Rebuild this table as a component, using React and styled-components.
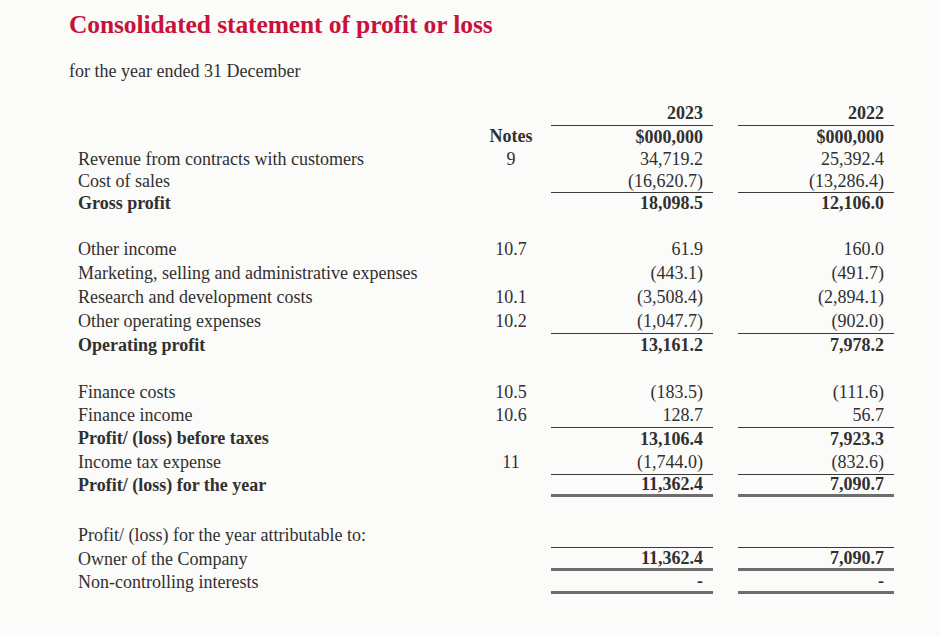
import styled, { createGlobalStyle } from 'styled-components';

const GlobalStyle = createGlobalStyle`
  html, body {
    margin: 0;
    padding: 0;
    background: #fbfbfa;
  }
`;

const Page = styled.div`
  width: 940px;
  height: 636px;
  box-sizing: border-box;
  padding: 9px 0 0 69px;
  font-family: 'Liberation Serif', 'Times New Roman', serif;
  color: #303030;
  overflow: hidden;
`;

const Title = styled.h1`
  margin: 0;
  font-family: 'Liberation Serif', serif;
  font-size: 25.5px;
  font-weight: 700;
  line-height: 32px;
  color: #c8123a;
  letter-spacing: -0.1px;
`;

const Subtitle = styled.div`
  margin-top: 19px;
  font-size: 18px;
  line-height: 22px;
`;

const Table = styled.div`
  margin: 20px 0 0 9px;
  display: flex;
  flex-direction: column;
`;

const Section = styled.div`
  display: grid;
  grid-template-columns: 393px 80px 162px 25px 156px;
  grid-auto-rows: ${(p) => p.$rowH}px;
  margin-top: ${(p) => p.$gap || 0}px;
`;

const Label = styled.div`
  grid-column: 1;
  display: flex;
  align-items: center;
  font-size: 18px;
  font-weight: ${(p) => (p.$bold ? 700 : 400)};
  white-space: nowrap;
`;

const Note = styled.div`
  grid-column: 2;
  display: flex;
  align-items: center;
  justify-content: center;
  font-size: 18px;
  font-weight: ${(p) => (p.$bold ? 700 : 400)};
`;

const lineFor = (kind) => {
  if (kind === 'single') return '1px solid #3a3a3a';
  if (kind === 'double') return '3px solid #6e6e6e';
  return 'none';
};

const Amount = styled.div`
  grid-column: ${(p) => p.$col};
  display: flex;
  align-items: center;
  justify-content: flex-end;
  box-sizing: border-box;
  padding-right: 10px;
  font-size: 18px;
  font-weight: ${(p) => (p.$bold ? 700 : 400)};
  border-top: ${(p) => lineFor(p.$top)};
  border-bottom: ${(p) => lineFor(p.$bottom)};
`;

const Row = ({ label, note, a, b, bold, amountBold, top, bottom, noteBold }) => (
  <>
    <Label $bold={bold}>{label}</Label>
    <Note $bold={noteBold}>{note}</Note>
    <Amount $col={3} $bold={bold || amountBold} $top={top} $bottom={bottom}>{a}</Amount>
    <Amount $col={5} $bold={bold || amountBold} $top={top} $bottom={bottom}>{b}</Amount>
  </>
);

const sections = [
  {
    rowH: 23,
    gap: 0,
    rows: [
      { label: '', note: '', a: '2023', b: '2022', bold: true },
      { label: '', note: 'Notes', noteBold: true, a: '$000,000', b: '$000,000', bold: true, top: 'single' },
    ],
  },
  {
    rowH: 22,
    gap: 0,
    rows: [
      { label: 'Revenue from contracts with customers', note: '9', a: '34,719.2', b: '25,392.4' },
      { label: 'Cost of sales', note: '', a: '(16,620.7)', b: '(13,286.4)' },
      { label: 'Gross profit', note: '', a: '18,098.5', b: '12,106.0', bold: true, top: 'single' },
    ],
  },
  {
    rowH: 24,
    gap: 23,
    rows: [
      { label: 'Other income', note: '10.7', a: '61.9', b: '160.0' },
      { label: 'Marketing, selling and administrative expenses', note: '', a: '(443.1)', b: '(491.7)' },
      { label: 'Research and development costs', note: '10.1', a: '(3,508.4)', b: '(2,894.1)' },
      { label: 'Other operating expenses', note: '10.2', a: '(1,047.7)', b: '(902.0)' },
      { label: 'Operating profit', note: '', a: '13,161.2', b: '7,978.2', bold: true, top: 'single' },
    ],
  },
  {
    rowH: 23.3,
    gap: 23.5,
    rows: [
      { label: 'Finance costs', note: '10.5', a: '(183.5)', b: '(111.6)' },
      { label: 'Finance income', note: '10.6', a: '128.7', b: '56.7' },
      { label: 'Profit/ (loss) before taxes', note: '', a: '13,106.4', b: '7,923.3', bold: true, top: 'single' },
      { label: 'Income tax expense', note: '11', a: '(1,744.0)', b: '(832.6)' },
      { label: 'Profit/ (loss) for the year', note: '', a: '11,362.4', b: '7,090.7', bold: true, top: 'single', bottom: 'double' },
    ],
  },
  {
    rowH: 23.5,
    gap: 27,
    rows: [
      { label: 'Profit/ (loss) for the year attributable to:', note: '', a: '', b: '' },
      { label: 'Owner of the Company', note: '', a: '11,362.4', b: '7,090.7', amountBold: true, top: 'single', bottom: 'double' },
      { label: 'Non-controlling interests', note: '', a: '-', b: '-', amountBold: true, bottom: 'double' },
    ],
  },
];

export default function App() {
  return (
    <Page>
      <GlobalStyle />
      <Title>Consolidated statement of profit or loss</Title>
      <Subtitle>for the year ended 31 December</Subtitle>
      <Table>
        {sections.map((s, i) => (
          <Section key={i} $rowH={s.rowH} $gap={s.gap}>
            {s.rows.map((r, j) => (
              <Row key={j} {...r} />
            ))}
          </Section>
        ))}
      </Table>
    </Page>
  );
}
